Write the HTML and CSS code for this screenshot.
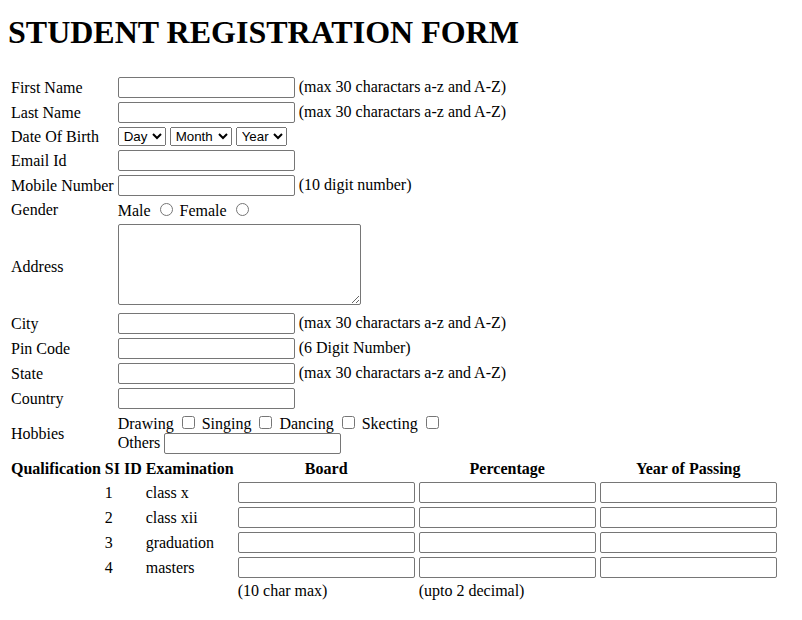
FILE: index.html
```html
<!DOCTYPE html>
<html>
<head>
<meta charset="utf-8">
<title>Student Registration Form</title>
<link rel="stylesheet" href="styles.css">
</head>
<body>
<h1 class="title">STUDENT REGISTRATION FORM</h1>
<form>
<table class="form-table">
  <tr><td>First Name</td><td><input type="text" class="txt"> (max 30 charactars a-z and A-Z)</td></tr>
  <tr><td>Last Name</td><td><input type="text" class="txt"> (max 30 charactars a-z and A-Z)</td></tr>
  <tr><td>Date Of Birth</td><td>
    <select class="sel"><option>Day</option></select>
    <select class="sel"><option>Month</option></select>
    <select class="sel"><option>Year</option></select>
  </td></tr>
  <tr><td>Email Id</td><td><input type="text" class="txt"></td></tr>
  <tr><td>Mobile Number</td><td><input type="text" class="txt"> (10 digit number)</td></tr>
  <tr><td>Gender</td><td>Male <input type="radio" name="g"> Female <input type="radio" name="g"></td></tr>
  <tr><td>Address</td><td><textarea class="addr"></textarea></td></tr>
  <tr><td>City</td><td><input type="text" class="txt"> (max 30 charactars a-z and A-Z)</td></tr>
  <tr><td>Pin Code</td><td><input type="text" class="txt"> (6 Digit Number)</td></tr>
  <tr><td>State</td><td><input type="text" class="txt"> (max 30 charactars a-z and A-Z)</td></tr>
  <tr><td>Country</td><td><input type="text" class="txt"></td></tr>
  <tr><td>Hobbies</td><td>Drawing <input type="checkbox"> Singing <input type="checkbox"> Dancing <input type="checkbox"> Skecting <input type="checkbox"><br>Others <input type="text" class="txt"></td></tr>
</table>
<table class="qual-table">
  <tr><th>Qualification</th><th>SI ID</th><th>Examination</th><th>Board</th><th>Percentage</th><th>Year of Passing</th></tr>
  <tr><td></td><td>1</td><td>class x</td><td><input type="text" class="txt"></td><td><input type="text" class="txt"></td><td><input type="text" class="txt"></td></tr>
  <tr><td></td><td>2</td><td>class xii</td><td><input type="text" class="txt"></td><td><input type="text" class="txt"></td><td><input type="text" class="txt"></td></tr>
  <tr><td></td><td>3</td><td>graduation</td><td><input type="text" class="txt"></td><td><input type="text" class="txt"></td><td><input type="text" class="txt"></td></tr>
  <tr><td></td><td>4</td><td>masters</td><td><input type="text" class="txt"></td><td><input type="text" class="txt"></td><td><input type="text" class="txt"></td></tr>
  <tr><td></td><td></td><td></td><td>(10 char max)</td><td>(upto 2 decimal)</td><td></td></tr>
</table>
</form>
</body>
</html>
```
FILE: styles.css
```css
body {
  margin: 8px;
  font-family: "Liberation Serif", "Times New Roman", serif;
  font-size: 16px;
  color: #000;
  background: #fff;
}
.title {
  font-size: 32px;
  font-weight: bold;
  margin: 6px 0 23px;
}
.form-table, .qual-table {
  border-spacing: 2px;
}
.form-table td, .qual-table td, .qual-table th {
  padding: 1px;
}
.txt {
  box-sizing: border-box;
  width: 177px;
  height: 21px;
  border: 1px solid #767676;
  border-radius: 2px;
  font-family: "Liberation Sans", Arial, sans-serif;
  font-size: 13.33px;
  padding: 1px 2px;
  margin: 0;
}
.sel {
  font-family: "Liberation Sans", Arial, sans-serif;
  font-size: 13.33px;
  height: 19px;
  padding: 0 1px;
  margin: 0;
}
.addr {
  box-sizing: border-box;
  width: 243px;
  height: 81px;
  border: 1px solid #767676;
  border-radius: 2px;
  margin: 0;
}
.qual-table th {
  font-weight: bold;
}
```
